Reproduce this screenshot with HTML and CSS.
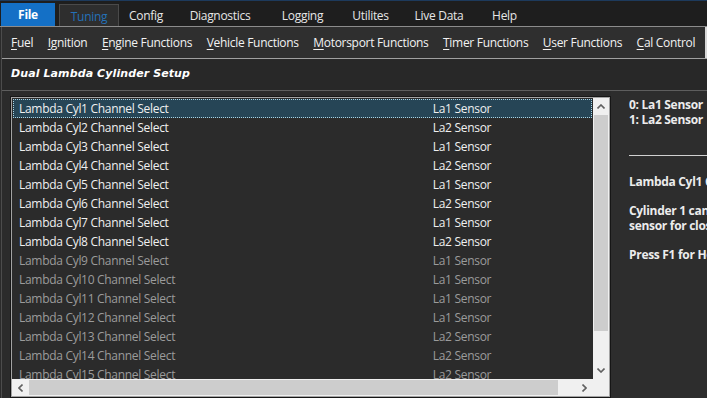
FILE: index.html
```html
<!DOCTYPE html>
<html lang="en">

<head>
    <meta charset="UTF-8">
    <title>Dual Lambda Cylinder Setup</title>
    <link rel="stylesheet" href="styles.css">
</head>

<body>

    <!-- Верхние вкладки -->
    <div class="tabs">
        <div class="tab tab-file">File</div>
        <div class="tab tab-active">Tuning</div>
        <div class="tab tab-config">Config</div>
        <div class="tab tab-diag">Diagnostics</div>
        <div class="tab tab-log">Logging</div>
        <div class="tab tab-util">Utilites</div>
        <div class="tab tab-live">Live Data</div>
        <div class="tab tab-help">Help</div>
    </div>

    <div class="frame">
        <!-- Подменю -->
        <div class="submenu">
            <span class="item"><u>F</u>uel</span>
            <span class="item"><u>I</u>gnition</span>
            <span class="item"><u>E</u>ngine Functions</span>
            <span class="item"><u>V</u>ehicle Functions</span>
            <span class="item"><u>M</u>otorsport Functions</span>
            <span class="item"><u>T</u>imer Functions</span>
            <span class="item"><u>U</u>ser Functions</span>
            <span class="item"><u>C</u>al Control</span>
            <span class="submenu-edge"></span>
        </div>

        <div class="page-title">Dual Lambda Cylinder Setup</div>

        <div class="workspace">
            <div class="listbox">
                <div class="listbox-inner">
                    <div class="rows">
                        <div class="row selected"><span class="name">Lambda Cyl1 Channel Select</span><span class="value">La1 Sensor</span></div>
                        <div class="row"><span class="name">Lambda Cyl2 Channel Select</span><span class="value">La2 Sensor</span></div>
                        <div class="row"><span class="name">Lambda Cyl3 Channel Select</span><span class="value">La1 Sensor</span></div>
                        <div class="row"><span class="name">Lambda Cyl4 Channel Select</span><span class="value">La2 Sensor</span></div>
                        <div class="row"><span class="name">Lambda Cyl5 Channel Select</span><span class="value">La1 Sensor</span></div>
                        <div class="row"><span class="name">Lambda Cyl6 Channel Select</span><span class="value">La2 Sensor</span></div>
                        <div class="row"><span class="name">Lambda Cyl7 Channel Select</span><span class="value">La1 Sensor</span></div>
                        <div class="row"><span class="name">Lambda Cyl8 Channel Select</span><span class="value">La2 Sensor</span></div>
                        <div class="row disabled"><span class="name">Lambda Cyl9 Channel Select</span><span class="value">La1 Sensor</span></div>
                        <div class="row disabled"><span class="name">Lambda Cyl10 Channel Select</span><span class="value">La1 Sensor</span></div>
                        <div class="row disabled"><span class="name">Lambda Cyl11 Channel Select</span><span class="value">La1 Sensor</span></div>
                        <div class="row disabled"><span class="name">Lambda Cyl12 Channel Select</span><span class="value">La1 Sensor</span></div>
                        <div class="row disabled"><span class="name">Lambda Cyl13 Channel Select</span><span class="value">La2 Sensor</span></div>
                        <div class="row disabled"><span class="name">Lambda Cyl14 Channel Select</span><span class="value">La2 Sensor</span></div>
                        <div class="row disabled"><span class="name">Lambda Cyl15 Channel Select</span><span class="value">La2 Sensor</span></div>
                    </div>

                    <!-- Вертикальная прокрутка -->
                    <div class="vscroll">
                        <div class="arrow">
                            <svg width="8" height="5" viewBox="0 0 8 5"><polyline points="0.5,4.5 4,1 7.5,4.5" fill="none" stroke="#606060" stroke-width="1.6"/></svg>
                        </div>
                        <div class="vthumb"></div>
                        <div class="vtrack"></div>
                        <div class="arrow">
                            <svg width="8" height="5" viewBox="0 0 8 5"><polyline points="0.5,0.5 4,4 7.5,0.5" fill="none" stroke="#606060" stroke-width="1.6"/></svg>
                        </div>
                    </div>

                    <!-- Горизонтальная прокрутка -->
                    <div class="hscroll">
                        <div class="arrow">
                            <svg width="5" height="8" viewBox="0 0 5 8"><polyline points="4.5,0.5 1,4 4.5,7.5" fill="none" stroke="#606060" stroke-width="1.6"/></svg>
                        </div>
                        <div class="hthumb"></div>
                        <div class="htrack"></div>
                        <div class="arrow">
                            <svg width="5" height="8" viewBox="0 0 5 8"><polyline points="0.5,0.5 4,4 0.5,7.5" fill="none" stroke="#606060" stroke-width="1.6"/></svg>
                        </div>
                    </div>
                    <div class="corner"></div>
                </div>
            </div>

            <!-- Панель подсказки -->
            <div class="help">
                <p>0: La1 Sensor</p>
                <p>1: La2 Sensor</p>
                <hr class="help-line">
                <p class="help-head">Lambda Cyl1 Channel Select</p>
                <p class="help-text">Cylinder 1 can use either La1 or La2</p>
                <p>sensor for closed loop lambda control.</p>
                <p class="help-text">Press F1 for Help</p>
            </div>
        </div>
    </div>

</body>

</html>
```

FILE: styles.css
```css
/* Тёмная тема окна настройки */
body {
    margin: 0;
    width: 707px;
    height: 398px;
    overflow: hidden;
    background-color: #2b2b2b;
    font-family: "Open Sans", "Noto Sans", sans-serif;
    font-size: 12px;
    letter-spacing: -0.3px;
    color: #f0f0f0;
}

.tabs {
    display: flex;
    align-items: flex-end;
    height: 25px;
    border-top: 1px solid #1d3a5c;
    border-bottom: 1px solid #8c8c8c;
    background-color: #1e1e1e;
}

.tab {
    height: 22px;
    line-height: 23px;
    text-align: center;
    color: #e6e6e6;
}

.tab-file {
    width: 54px;
    height: 23px;
    margin-left: 1px;
    margin-right: 4px;
    background-color: #1470c6;
    color: #fff;
    font-weight: bold;
}

.tab-active {
    width: 58px;
    height: 21px;
    border: 1px solid #4a4a4a;
    border-bottom: none;
    background-color: #2e2e2e;
    color: #2471b8;
}

.tab-config { width: 54px; }
.tab-diag { width: 94px; }
.tab-log { width: 71px; }
.tab-util { width: 65px; }
.tab-live { width: 72px; }
.tab-help { width: 59px; }

.frame {
    border-left: 1px solid #4c4c4c;
    margin-left: 1px;
}

.submenu {
    display: flex;
    align-items: center;
    height: 31px;
    padding-left: 9px;
    border-bottom: 1px solid #a0a0a0;
    background-color: #2f2f2f;
    position: relative;
}

.submenu .item {
    margin-right: 14.5px;
    white-space: nowrap;
    color: #f2f2f2;
}

.submenu u {
    text-underline-offset: 2px;
}

.submenu-edge {
    position: absolute;
    right: 0;
    top: 0;
    width: 2px;
    height: 31px;
    background-color: #d8d8d8;
}

.page-title {
    height: 31px;
    line-height: 29px;
    padding-left: 9px;
    font-family: "DejaVu Sans", sans-serif;
    font-size: 11px;
    letter-spacing: 0.1px;
    font-weight: bold;
    font-style: italic;
    color: #fff;
    background-color: #282828;
}

.workspace {
    display: flex;
    height: 307px;
    border-top: 1px solid #5e5e5e;
}

.listbox {
    margin: 5px 0 0 8px;
    width: 599px;
    height: 300px;
    border: 1px solid #161616;
    flex-shrink: 0;
}

.listbox-inner {
    display: grid;
    grid-template-columns: 581px 16px;
    grid-template-rows: 281px 17px;
    border: 1px solid #a3a3a3;
    background-color: #2b2b2b;
}

.rows {
    overflow: hidden;
    padding-top: 1px;
}

.row {
    display: flex;
    height: 19px;
    line-height: 18px;
    margin: 0 1px;
    border: 1px solid transparent;
    box-sizing: border-box;
    white-space: nowrap;
}

.row .name {
    width: 393px;
    padding-left: 5px;
}

.row .value {
    width: 100px;
    text-align: center;
}

.row.selected {
    background-color: #264556;
    border: 1px dotted #a9d3e3;
}

.row.disabled {
    color: #9b9b9b;
}

.vscroll {
    display: flex;
    flex-direction: column;
    background-color: #f0f0f0;
}

.vscroll .arrow {
    height: 17px;
    display: flex;
    align-items: center;
    justify-content: center;
}

.vthumb {
    height: 216px;
    margin: 0 1px;
    background-color: #cdcdcd;
}

.vtrack {
    flex: 1;
}

.hscroll {
    display: flex;
    background-color: #f0f0f0;
}

.hscroll .arrow {
    width: 17px;
    display: flex;
    align-items: center;
    justify-content: center;
}

.hthumb {
    width: 529px;
    margin: 1px 0;
    background-color: #cdcdcd;
}

.htrack {
    flex: 1;
}

.corner {
    background-color: #f0f0f0;
}

.help {
    flex: 1;
    padding: 6px 0 0 18px;
    background-color: #2d2d2d;
    font-weight: bold;
    white-space: nowrap;
    overflow: hidden;
    color: #ececec;
}

.help p {
    margin: 0;
    line-height: 15px;
}

.help-line {
    margin: 28px 0 0 0;
    border: none;
    border-top: 1px solid #d0d0d0;
    height: 0;
}

.help-head {
    margin-top: 18px !important;
}

.help-text {
    margin-top: 14px !important;
}
```
